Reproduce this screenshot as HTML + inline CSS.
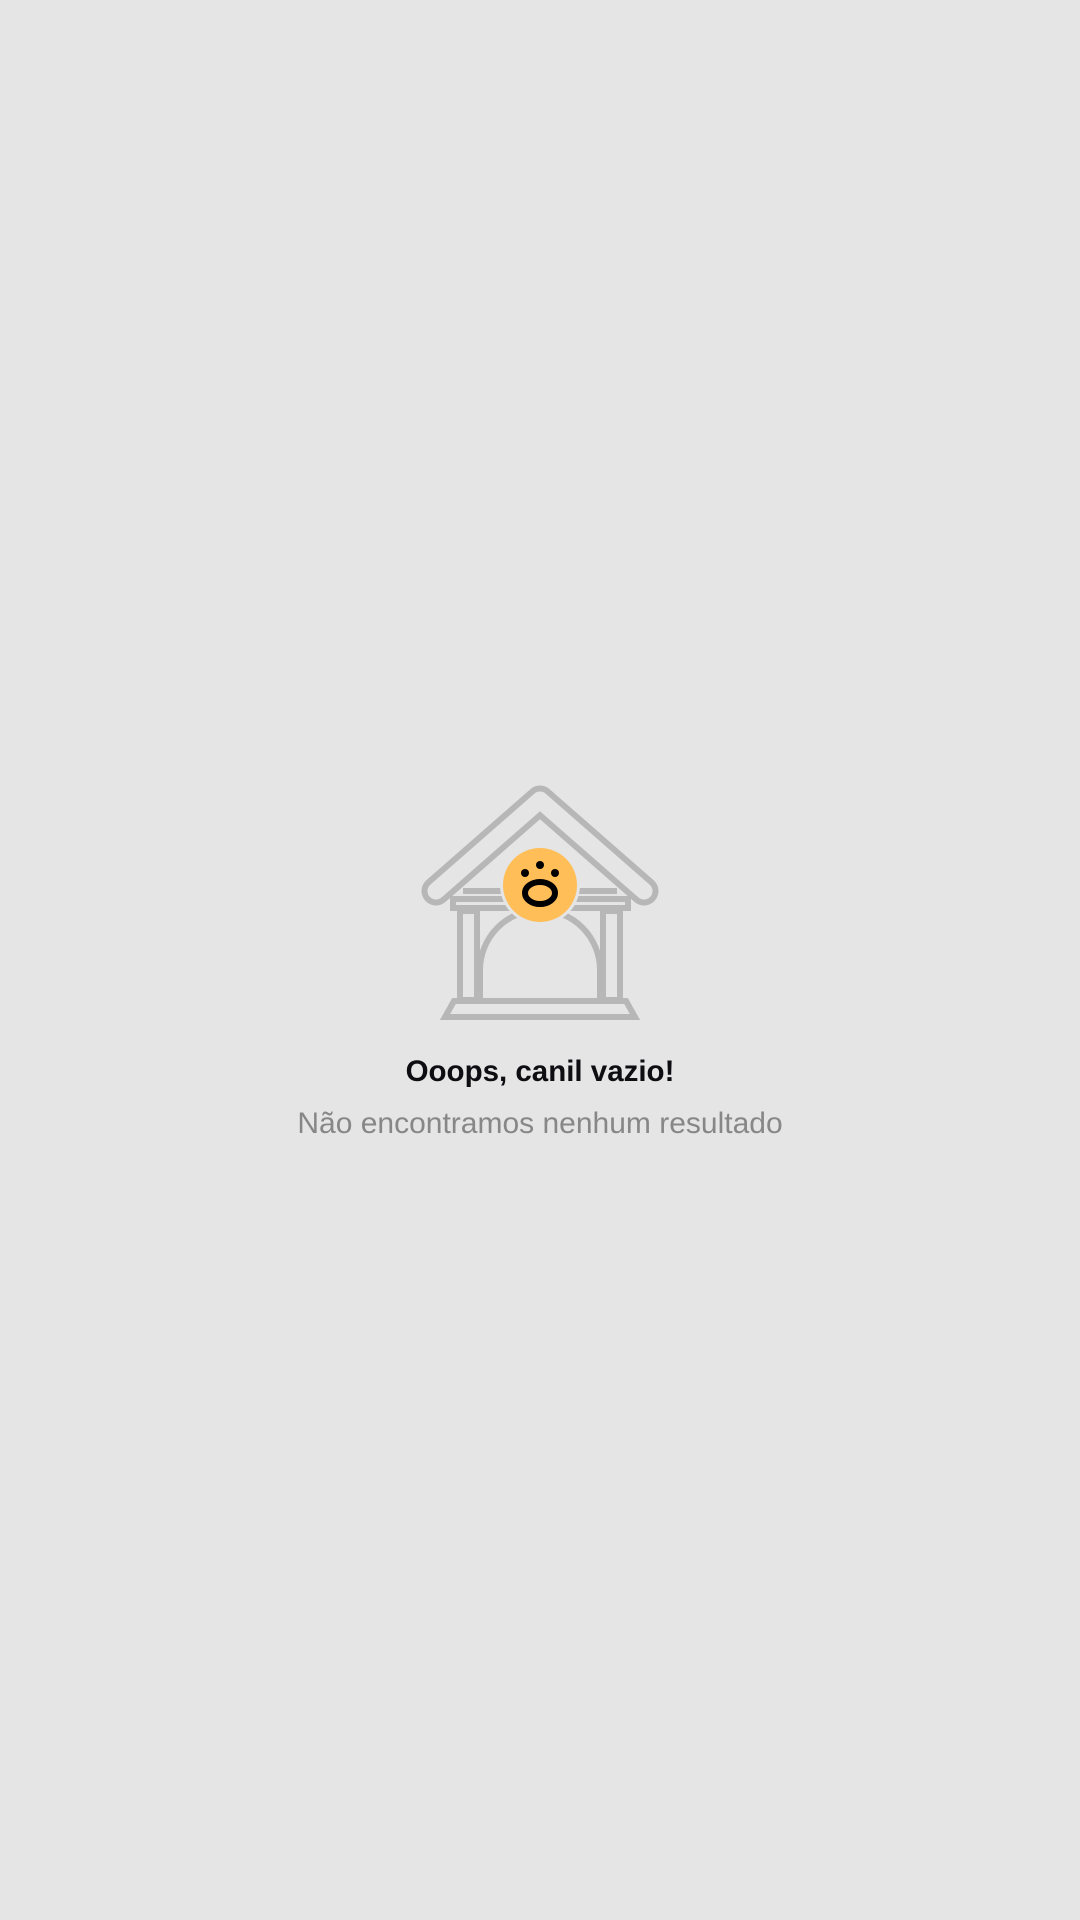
<!DOCTYPE html>
<html><head><meta charset="utf-8"><style>
html,body{margin:0;padding:0;width:1080px;height:1920px;background:#e5e5e5;overflow:hidden}
svg{position:absolute;left:0;top:0}
.t{position:absolute;left:0;width:1080px;text-align:center;font-family:"Liberation Sans",sans-serif}
#a{top:1055px;font-size:29.5px;font-weight:bold;color:#0d0d12}
#b{top:1107px;font-size:30px;color:#878787}
</style></head><body>
<svg width="1080" height="1920" viewBox="0 0 1080 1920">
<g fill="none" stroke="#b7b7b7" stroke-width="6">
<polyline points="436,891 540,800 644,891" stroke-width="29" stroke-linecap="round" stroke-linejoin="round"/>
<polyline points="436,891 540,800 644,891" stroke="#e5e5e5" stroke-width="17" stroke-linecap="round" stroke-linejoin="round"/>
<line x1="463" y1="891" x2="617" y2="891"/>
<rect x="453" y="899" width="175" height="9"/>
<rect x="460" y="911" width="17" height="89"/>
<rect x="603" y="911" width="17" height="89"/>
<path d="M480,1000 V970 A60,60 0 0 1 600,970 V1000"/>
<polygon points="454,1001 626,1001 635,1017 445,1017"/>
</g>
<circle cx="540" cy="885" r="40" fill="#e5e5e5"/>
<circle cx="540" cy="885" r="37" fill="#ffbe58"/>
<circle cx="525" cy="873" r="4" fill="#000"/>
<circle cx="540" cy="865" r="4" fill="#000"/>
<circle cx="555" cy="873" r="4" fill="#000"/>
<ellipse cx="540" cy="893" rx="15" ry="11" fill="none" stroke="#000" stroke-width="6"/>
</svg>
<div class="t" id="a">Ooops, canil vazio!</div>
<div class="t" id="b">Não encontramos nenhum resultado</div>
</body></html>
